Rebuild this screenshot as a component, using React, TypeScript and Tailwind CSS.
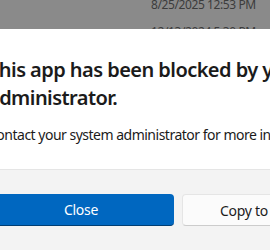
export default function App() {
    return (
        <div className="w-[270px] h-[250px] overflow-hidden bg-[#8a8a8a] font-['Noto_Sans',sans-serif]">
            <div className="h-[29px] overflow-hidden pl-[151px] text-[12px] leading-[27px] tracking-[-0.4px] text-[#3c3c3c]">
                <div className="-mt-[9px]">8/25/2025 12:53 PM</div>
                <div>12/13/2024 5:30 PM</div>
            </div>

            <div className="w-[500px] -ml-[36px] bg-white">
                <div className="px-[24px] pt-[27px] pb-[24px]">
                    <h1 className="text-[20px] leading-[28px] font-semibold tracking-[-0.55px] text-[#1b1b1b] w-[440px]">
                        This app has been blocked by your system administrator.
                    </h1>
                    <p className="mt-[13px] text-[14px] leading-[20px] tracking-[-0.5px] text-[#1b1b1b]">
                        Contact your system administrator for more information.
                    </p>
                </div>

                <div className="bg-[#f3f3f3] border-t border-[#e5e5e5] px-[24px] pt-[24px] pb-[24px] flex gap-[8px]">
                    <button
                        type="button"
                        className="w-[186px] h-[32px] rounded-[4px] bg-[#0067c0] border-b border-[#003e73] text-white text-[14px] tracking-[-0.3px]"
                    >
                        Close
                    </button>
                    <button
                        type="button"
                        className="w-[186px] h-[32px] rounded-[4px] bg-[#fbfbfb] border border-[#e5e5e5] border-b-[#cccccc] text-[#1b1b1b] text-[14px] tracking-[-0.3px]"
                    >
                        Copy to clipboard
                    </button>
                </div>
            </div>
        </div>
    )
}
